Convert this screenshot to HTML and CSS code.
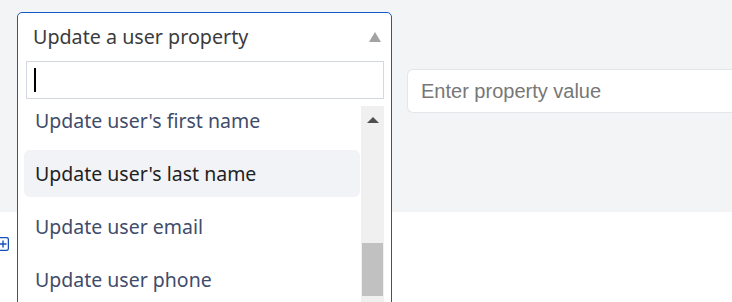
FILE: index.html
```html
<!DOCTYPE html>
<html>
<head>
<meta charset="utf-8">
<link rel="stylesheet" href="styles.css">
</head>
<body>
<div class="panel">
  <div class="select">
    <div class="select-head">
      <span class="select-label">Update a user property</span>
      <span class="caret"></span>
    </div>
    <div class="search"><span class="cursor"></span></div>
    <div class="menu">
      <ul class="options">
        <li class="option">Update user's first name</li>
        <li class="option hover">Update user's last name</li>
        <li class="option">Update user email</li>
        <li class="option">Update user phone</li>
      </ul>
      <div class="scrollbar">
        <span class="sb-arrow"></span>
        <span class="sb-thumb"></span>
      </div>
    </div>
  </div>
  <div class="value-input">Enter property value</div>
</div>
<div class="below">
  <svg class="add-icon" width="12" height="14" viewBox="0 0 12 14"><rect x="0.6" y="0.6" width="10.8" height="12.8" rx="2" fill="none" stroke="#1550b8" stroke-width="1.3"/><path d="M6 3.5v7M2.5 7h7" stroke="#1550b8" stroke-width="1.4"/></svg>
</div>
</body>
</html>
```
FILE: styles.css
```css
html, body {
  margin: 0;
  padding: 0;
  background: #ffffff;
  overflow: hidden;
  width: 732px;
  height: 302px;
}
body {
  font-family: "Noto Sans", "Open Sans", sans-serif;
}
.panel {
  background: #f3f4f6;
  height: 212px;
  box-sizing: border-box;
  padding: 12px 0 0 17px;
  display: flex;
  align-items: flex-start;
  gap: 15px;
}
.select {
  width: 375px;
  flex: none;
  box-sizing: border-box;
  border: 1px solid #1759c4;
  border-radius: 5px;
  background: #ffffff;
  height: 300px;
  padding: 0 7px 0 8px;
}
.select-head {
  height: 48px;
  display: flex;
  align-items: center;
  justify-content: space-between;
  padding-left: 7px;
  padding-right: 3px;
}
.select-label {
  font-size: 19.7px;
  color: #3c3c3c;
  position: relative;
  top: -1px;
}
.caret {
  width: 0;
  height: 0;
  border-left: 6px solid transparent;
  border-right: 6px solid transparent;
  border-bottom: 10px solid #a3a3a3;
}
.search {
  height: 38px;
  box-sizing: border-box;
  border: 1px solid #d3d8e0;
  display: flex;
  align-items: center;
  padding-left: 7px;
}
.cursor {
  width: 2px;
  height: 24px;
  background: #000;
}
.menu {
  display: flex;
  margin-top: 1px;
}
.options {
  list-style: none;
  margin: -3px 0 0 -2px;
  padding: 0;
  flex: 1;
  padding-right: 1px;
}
.option {
  height: 47px;
  margin-bottom: 6px;
  display: flex;
  align-items: center;
  padding-left: 11px;
  font-size: 19.5px;
  color: #3f4c6b;
  border-radius: 6px;
}
.option.hover {
  background: #f1f3f6;
  color: #1f1f1f;
}
.scrollbar {
  width: 23px;
  flex: none;
  background: #f0f0f0;
  margin-top: 6px;
  height: 200px;
  display: flex;
  flex-direction: column;
  align-items: center;
}
.sb-arrow {
  margin-top: 11px;
  width: 0;
  height: 0;
  border-left: 6px solid transparent;
  border-right: 6px solid transparent;
  border-bottom: 6px solid #505050;
}
.sb-thumb {
  margin-top: 120px;
  width: 21px;
  height: 53px;
  background: #c1c1c1;
}
.value-input {
  margin-top: 57px;
  flex: 1;
  height: 44px;
  box-sizing: border-box;
  border: 1px solid #e3e6ea;
  border-right: none;
  border-radius: 6px 0 0 6px;
  background: #ffffff;
  font-family: "Liberation Sans", Arial, sans-serif;
  font-size: 20px;
  color: #777777;
  display: flex;
  align-items: center;
  padding-left: 13px;
}
.below {
  padding-top: 25px;
  margin-left: -3px;
}
.add-icon {
  display: block;
}
```
